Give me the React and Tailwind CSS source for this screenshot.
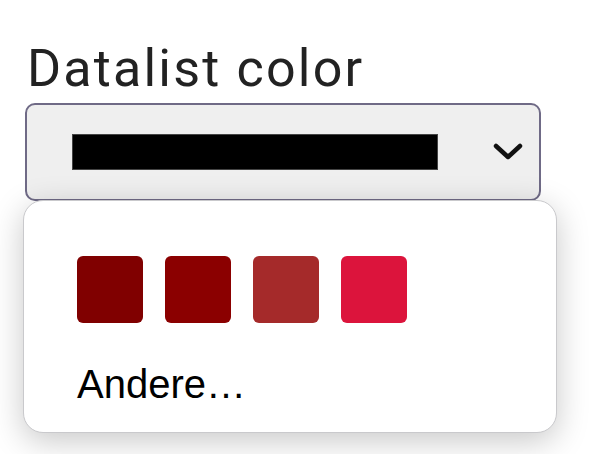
import React from 'react';

const swatches = ['#800000', '#8b0000', '#a52a2a', '#dc143c'];

export default function App() {
	return (
		<div className="relative w-[600px] h-[454px] overflow-hidden bg-white">
			<div className="pt-[39px] pl-[25px]">
				<div className="ml-[2px] text-[52px] leading-[60px] font-normal tracking-[2.2px] text-[#222] font-['Roboto',sans-serif]">
					Datalist color
				</div>
				<div className="mt-[4px] w-[516px] h-[98px] rounded-[10px] border-2 border-[#6f6a86] bg-[#efefef] flex items-center pl-[45px] pr-[15px]">
					<div className="w-[366px] h-[36px] bg-black border border-[#444]" />
					<svg className="ml-auto" width="32" height="20" viewBox="0 0 32 20">
						<path d="M4 4 L16 15 L28 4" fill="none" stroke="#111" strokeWidth="4.5" strokeLinecap="round" strokeLinejoin="round" />
					</svg>
				</div>
			</div>
			<div className="absolute left-[23px] top-[200px] w-[534px] h-[233px] rounded-[20px] bg-white border border-[#c9c9cc] shadow-[0_8px_32px_rgba(0,0,0,0.22)] pt-[55px] pl-[53px]">
				<div className="flex gap-[22px]">
					{swatches.map((c) => (
						<div key={c} className="w-[66px] h-[67px] rounded-[6px]" style={{backgroundColor: c}} />
					))}
				</div>
				<div className="mt-[38px] text-[40px] leading-[46px] text-black font-['Liberation_Sans',Arial,sans-serif]">
					Andere…
				</div>
			</div>
		</div>
	);
}
